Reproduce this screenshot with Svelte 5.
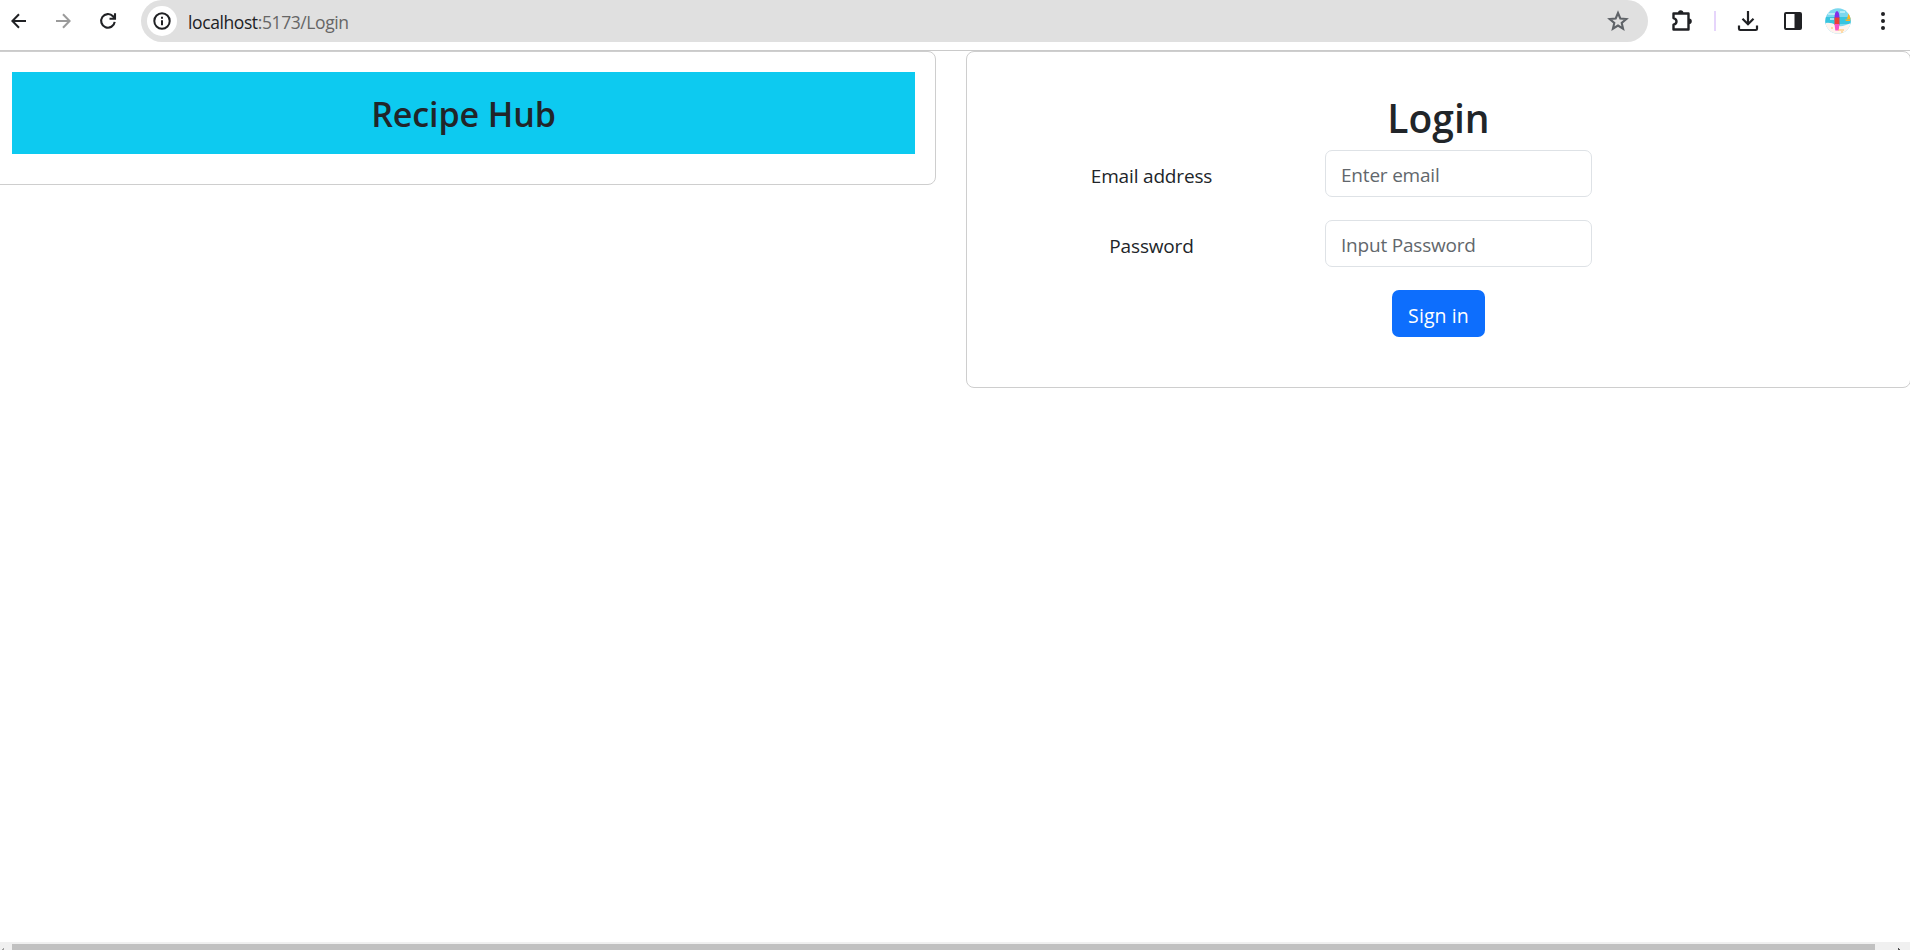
<script>
  const fields = [
    { id: 'email', label: 'Email address', hint: 'Enter email', type: 'email' },
    { id: 'password', label: 'Password', hint: 'Input Password', type: 'password' }
  ];
</script>

<div class="window">
  <header class="toolbar">
    <svg class="back" width="20" height="20" viewBox="0 0 20 20" fill="none" stroke="#202124" stroke-width="2"><path d="M17 10H3.6M10 3.2 3.4 10l6.6 6.8" /></svg>
    <svg class="forward" width="20" height="20" viewBox="0 0 20 20" fill="none" stroke="#9b9b9b" stroke-width="2"><path d="M3 10h13.4M10 3.2l6.6 6.8-6.6 6.8" /></svg>
    <svg class="reload" width="20" height="20" viewBox="0 0 20 20" fill="none" stroke="#202124" stroke-width="2.1"><path d="M16.7 10.8A6.8 6.8 0 1 1 15 5.3l1.8 1.9M17 2.3v5.4h-5.5" /></svg>
    <div class="address">
      <span class="info">
        <svg width="20" height="20" viewBox="0 0 20 20" fill="none" stroke="#202124" stroke-width="2"><circle cx="10" cy="10" r="7.7" /><path d="M10 9.2v5M10 5.7v2" /></svg>
      </span>
      <span class="url"><b>localhost</b>:5173/Login</span>
      <svg class="star" width="22" height="22" viewBox="0 0 22 22" fill="none" stroke="#5f6368" stroke-width="2.1"><path d="m11 3 2.3 5.5 6 .5-4.6 3.9 1.4 5.8-5.1-3.1-5.1 3.1 1.4-5.8L2.7 9l6-.5z" /></svg>
    </div>
    <svg class="puzzle" width="24" height="24" viewBox="0 0 24 24"><path d="M4.5 4.5h15v16h-15v-4.8q3-.9 3-3.3t-3-3.3z" fill="none" stroke="#202124" stroke-width="2.4" stroke-linejoin="round" /><path d="M9 4a2.7 2.7 0 0 1 5.4 0zM20 9.5a2.8 2.8 0 0 1 0 5.6z" fill="#202124" /></svg>
    <span class="divider"></span>
    <svg class="download" width="22" height="22" viewBox="0 0 22 22" fill="none" stroke="#202124" stroke-width="2.2"><path d="M11 1v13M5.5 8.8 11 14.3l5.5-5.5M2 15.5v3.2q0 1.3 1.3 1.3h15.4q1.3 0 1.3-1.3v-3.2" /></svg>
    <svg class="panel" width="20" height="20" viewBox="0 0 20 20"><rect x="2" y="2" width="16" height="16" rx="1" fill="none" stroke="#202124" stroke-width="2" /><path d="M11.5 2H18v16h-6.5z" fill="#202124" /></svg>
    <svg class="avatar" width="26" height="26" viewBox="0 0 26 26">
      <defs><clipPath id="round"><circle cx="13" cy="13" r="12.7" /></clipPath></defs>
      <g clip-path="url(#round)">
        <path fill="#7bd7ee" d="M0 0h26v26H0z" />
        <path fill="#38c5df" d="M0 9h26v7H0z" />
        <path d="M3 6h7M15 4h5M5 11h4" stroke="#c9f2f8" stroke-width="1.5" />
        <path fill="#fff3ed" d="M0 15q6-1 11 2t15-2v11H0z" />
        <path fill="#ffb21d" d="M24 4l-2 7h4V4zM20 11.500h6l-1 1.500h-4z" />
        <path fill="#852ce8" d="M9.500 10q0-6 2.500-7 2.500 1 2.500 7z" />
        <path fill="#ef3e35" d="M9.500 9.500h5V17h-5z" />
        <path fill="#fa50c5" d="M9.500 16h5l-.8 6.500h-3.400z" />
        <path d="M13 22h6M6 20h2M16 24h2" stroke="#ffc160" />
      </g>
    </svg>
    <svg class="more" width="6" height="22" viewBox="0 0 6 22" fill="#202124"><circle cx="3" cy="4" r="2" /><circle cx="3" cy="11" r="2" /><circle cx="3" cy="18" r="2" /></svg>
  </header>

  <main>
    <section class="card brand">
      <h2>Recipe Hub</h2>
    </section>
    <section class="card login">
      <h1>Login</h1>
      <form onsubmit={(e) => e.preventDefault()}>
        {#each fields as field}
          <div class="row">
            <label for={field.id}>{field.label}</label>
            <input id={field.id} type={field.type} placeholder={field.hint} />
          </div>
        {/each}
        <button type="submit">Sign in</button>
      </form>
    </section>
  </main>

  <footer class="scroll">
    <svg width="12" height="8" viewBox="0 0 12 8" fill="#a0a0a0"><path d="M2 7h1V6h1v2H2z" /></svg>
    <span class="thumb"></span>
    <svg width="35" height="8" viewBox="0 0 35 8" fill="#505050"><path d="M23 6h1v1h1v1h-2z" /></svg>
  </footer>
</div>

<style>
  :global(body) { margin: 0; background: #fff; overflow: hidden; }
  * { box-sizing: border-box; }
  svg { display: block; flex: none; }
  .window {
    display: flex;
    flex-direction: column;
    width: 1910px;
    height: 950px;
    overflow: hidden;
    font-family: "Open Sans", "Noto Sans", sans-serif;
    color: #212529;
    background: #fff;
  }
  .toolbar {
    display: flex;
    align-items: center;
    height: 51px;
    padding: 0 0 9px 9px;
    border-bottom: 1px solid #cacaca;
    flex: none;
  }
  .forward { margin-left: 24px; }
  .reload { margin-left: 25px; }
  .address {
    display: flex;
    align-items: center;
    width: 1507px;
    height: 42px;
    margin-left: 23px;
    padding: 0 19px 0 6px;
    border-radius: 21px;
    background: #e0e0e0;
  }
  .info {
    display: flex;
    align-items: center;
    justify-content: center;
    width: 30px;
    height: 30px;
    border-radius: 50%;
    background: #fff;
  }
  .url { margin: 2px 0 0 11px; font-size: 17.5px; color: #666; letter-spacing: -.4px; }
  .url b { font-weight: 400; color: #202124; }
  .star { margin-left: auto; }
  .puzzle { margin-left: 21px; }
  .divider { width: 2px; height: 20px; margin-left: 21px; background: #e6d5fb; }
  .download { margin-left: 21px; }
  .panel { margin-left: 24px; }
  .avatar { margin-left: 22px; }
  .more { margin-left: 29px; }
  main { display: flex; align-items: flex-start; flex: 1; gap: 30px; }
  .card { border: 1px solid #cecece; border-radius: 8px; flex: none; }
  .brand { width: 946px; height: 134px; margin-left: -10px; padding: 20px 20px 0 21px; }
  h2 {
    height: 82px;
    margin: 0;
    background: #0dcaf0;
    font-size: 34px;
    font-weight: 550;
    line-height: 85px;
    text-align: center;
    letter-spacing: -.1px;
  }
  .login { width: 945px; height: 337px; padding: 41px 36px 0; }
  h1 { height: 57px; margin: 0; font-size: 39px; font-weight: 550; line-height: 50px; text-align: center; }
  form { display: flex; flex-direction: column; }
  .row { display: grid; grid-template-columns: 297px 267px; gap: 25px; margin-bottom: 23px; }
  label { padding-top: 9px; font-size: 19px; line-height: 34px; text-align: center; letter-spacing: -.17px; }
  input {
    height: 47px;
    padding: 2px 15px 0;
    border: 1px solid #dee2e6;
    border-radius: 7px;
    background: #fff;
    font: 19px "Open Sans", sans-serif;
    letter-spacing: -.2px;
  }
  input::placeholder { color: #62676c; opacity: 1; }
  button {
    align-self: center;
    width: 93px;
    height: 47px;
    padding: 3px 0 0;
    border: 0;
    border-radius: 7px;
    background: #0d6efd;
    color: #fff;
    font: 19.5px "Open Sans", sans-serif;
    letter-spacing: .1px;
  }
  .scroll { display: flex; height: 8px; background: #f0f0f0; flex: none; }
  .thumb { flex: 1; margin-top: 2px; background: #c1c1c1; }
</style>
